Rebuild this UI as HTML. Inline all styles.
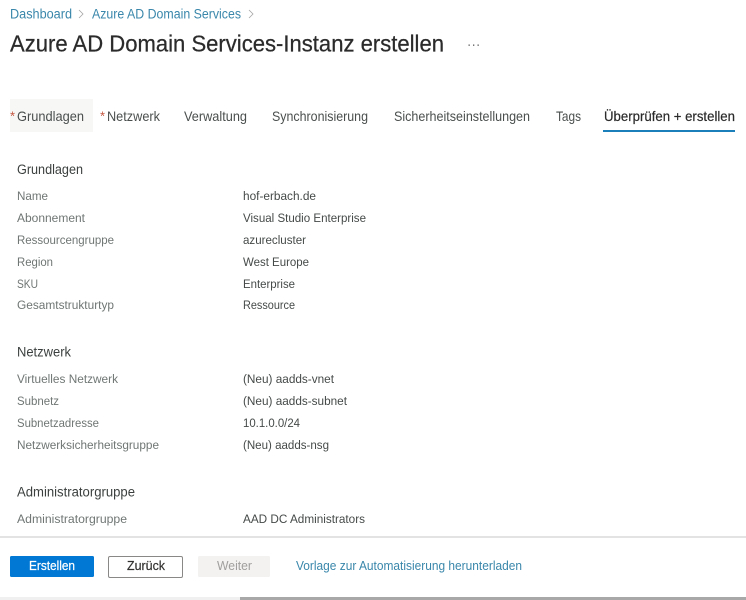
<!DOCTYPE html>
<html lang="de">
<head>
<meta charset="utf-8">
<title>Azure AD Domain Services-Instanz erstellen</title>
<style>
html,body{margin:0;padding:0;background:#fff;width:746px;height:600px;overflow:hidden}
svg{display:block;font-family:"Liberation Sans",sans-serif}
.bc{font-size:13.5px;fill:#3a87ab}
.tab{font-size:14px;fill:#4a4f4d}
.star{font-size:13px;fill:#c4553f}
.h{font-size:13.5px;fill:#3b403e}
.l{font-size:12.2px;fill:#6f7674}
.v{font-size:12.2px;fill:#454a48}
</style>
</head>
<body>
<svg width="746" height="600" viewBox="0 0 746 600" xmlns="http://www.w3.org/2000/svg" style="filter:blur(.3px)">
<rect width="746" height="600" fill="#fff"/>

<text class="bc" x="10" y="18.500" textLength="62" lengthAdjust="spacingAndGlyphs">Dashboard</text>
<path d="M79 10l4 4-4 4" fill="none" stroke="#a5a5a5" stroke-width=".8"/>
<text class="bc" x="92" y="18.500" textLength="149" lengthAdjust="spacingAndGlyphs">Azure AD Domain Services</text>
<path d="M249 10l4 4-4 4" fill="none" stroke="#a5a5a5" stroke-width=".8"/>

<text x="10" y="51.500" font-size="23" fill="#2b2b2b" stroke="#2b2b2b" stroke-width=".25" textLength="434" lengthAdjust="spacingAndGlyphs">Azure AD Domain Services-Instanz erstellen</text>
<g fill="#555"><rect x="468.500" y="44.500" width="1.300" height="1.300"/><rect x="473" y="44.500" width="1.300" height="1.300"/><rect x="477.500" y="44.500" width="1.300" height="1.300"/></g>

<rect x="10" y="99" width="83" height="33" fill="#f7f7f6"/>
<text class="star" x="10" y="120.500">*</text>
<text class="tab" x="17" y="121" textLength="67" lengthAdjust="spacingAndGlyphs">Grundlagen</text>
<text class="star" x="100" y="120.500">*</text>
<text class="tab" x="107" y="121" textLength="53" lengthAdjust="spacingAndGlyphs">Netzwerk</text>
<text class="tab" x="184" y="121" textLength="63" lengthAdjust="spacingAndGlyphs">Verwaltung</text>
<text class="tab" x="272" y="121" textLength="96" lengthAdjust="spacingAndGlyphs">Synchronisierung</text>
<text class="tab" x="394" y="121" textLength="136" lengthAdjust="spacingAndGlyphs">Sicherheitseinstellungen</text>
<text class="tab" x="556" y="121" textLength="25" lengthAdjust="spacingAndGlyphs">Tags</text>
<text x="604" y="121" font-size="14" fill="#2b2b2b" stroke="#2b2b2b" stroke-width=".2" textLength="131" lengthAdjust="spacingAndGlyphs">Überprüfen + erstellen</text>
<rect x="603" y="130" width="132" height="2" fill="#1b7fba"/>

<text class="h" x="17" y="174" textLength="66" lengthAdjust="spacingAndGlyphs">Grundlagen</text>
<text class="l" x="17" y="200" textLength="31" lengthAdjust="spacingAndGlyphs">Name</text>
<text class="v" x="243" y="200" textLength="73" lengthAdjust="spacingAndGlyphs">hof-erbach.de</text>
<text class="l" x="17" y="222" textLength="68" lengthAdjust="spacingAndGlyphs">Abonnement</text>
<text class="v" x="243" y="222" textLength="123" lengthAdjust="spacingAndGlyphs">Visual Studio Enterprise</text>
<text class="l" x="17" y="244" textLength="97" lengthAdjust="spacingAndGlyphs">Ressourcengruppe</text>
<text class="v" x="243" y="244" textLength="63" lengthAdjust="spacingAndGlyphs">azurecluster</text>
<text class="l" x="17" y="266" textLength="36" lengthAdjust="spacingAndGlyphs">Region</text>
<text class="v" x="243" y="266" textLength="66" lengthAdjust="spacingAndGlyphs">West Europe</text>
<text class="l" x="17" y="288" textLength="21" lengthAdjust="spacingAndGlyphs">SKU</text>
<text class="v" x="243" y="288" textLength="52" lengthAdjust="spacingAndGlyphs">Enterprise</text>
<text class="l" x="17" y="309" textLength="97" lengthAdjust="spacingAndGlyphs">Gesamtstrukturtyp</text>
<text class="v" x="243" y="309" textLength="52" lengthAdjust="spacingAndGlyphs">Ressource</text>

<text class="h" x="17" y="356.500" textLength="54" lengthAdjust="spacingAndGlyphs">Netzwerk</text>
<text class="l" x="17" y="383" textLength="101" lengthAdjust="spacingAndGlyphs">Virtuelles Netzwerk</text>
<text class="v" x="243" y="383" textLength="91" lengthAdjust="spacingAndGlyphs">(Neu) aadds-vnet</text>
<text class="l" x="17" y="405" textLength="42" lengthAdjust="spacingAndGlyphs">Subnetz</text>
<text class="v" x="243" y="405" textLength="104" lengthAdjust="spacingAndGlyphs">(Neu) aadds-subnet</text>
<text class="l" x="17" y="427" textLength="82" lengthAdjust="spacingAndGlyphs">Subnetzadresse</text>
<text class="v" x="243" y="427" textLength="57" lengthAdjust="spacingAndGlyphs">10.1.0.0/24</text>
<text class="l" x="17" y="449" textLength="142" lengthAdjust="spacingAndGlyphs">Netzwerksicherheitsgruppe</text>
<text class="v" x="243" y="449" textLength="86" lengthAdjust="spacingAndGlyphs">(Neu) aadds-nsg</text>

<text class="h" x="17" y="496.500" textLength="118" lengthAdjust="spacingAndGlyphs">Administratorgruppe</text>
<text class="l" x="17" y="523" textLength="110" lengthAdjust="spacingAndGlyphs">Administratorgruppe</text>
<text class="v" x="243" y="523" textLength="122" lengthAdjust="spacingAndGlyphs">AAD DC Administrators</text>

<rect x="0" y="536" width="746" height="2" fill="#e3e3e3"/>

<rect x="10" y="556" width="84" height="21" rx="1.500" fill="#0078d4"/>
<text x="29" y="570" font-size="13" fill="#fff" stroke="#fff" stroke-width=".2" textLength="46" lengthAdjust="spacingAndGlyphs">Erstellen</text>
<rect x="108.500" y="556.500" width="74" height="21" rx="1.500" fill="#fff" stroke="#8a8886"/>
<text x="127" y="570" font-size="13" fill="#323130" stroke="#323130" stroke-width=".2" textLength="38" lengthAdjust="spacingAndGlyphs">Zurück</text>
<rect x="198" y="556" width="72" height="21" rx="1.500" fill="#f3f2f1"/>
<text x="217" y="570" font-size="13" fill="#a19f9d" textLength="35" lengthAdjust="spacingAndGlyphs">Weiter</text>
<text x="296" y="570" font-size="13" fill="#3a87ab" textLength="226" lengthAdjust="spacingAndGlyphs">Vorlage zur Automatisierung herunterladen</text>

<rect x="0" y="597" width="240" height="3" fill="#f0f0f0"/>
<rect x="240" y="597" width="506" height="3" fill="#a8a8a8"/>
</svg>
</body>
</html>
